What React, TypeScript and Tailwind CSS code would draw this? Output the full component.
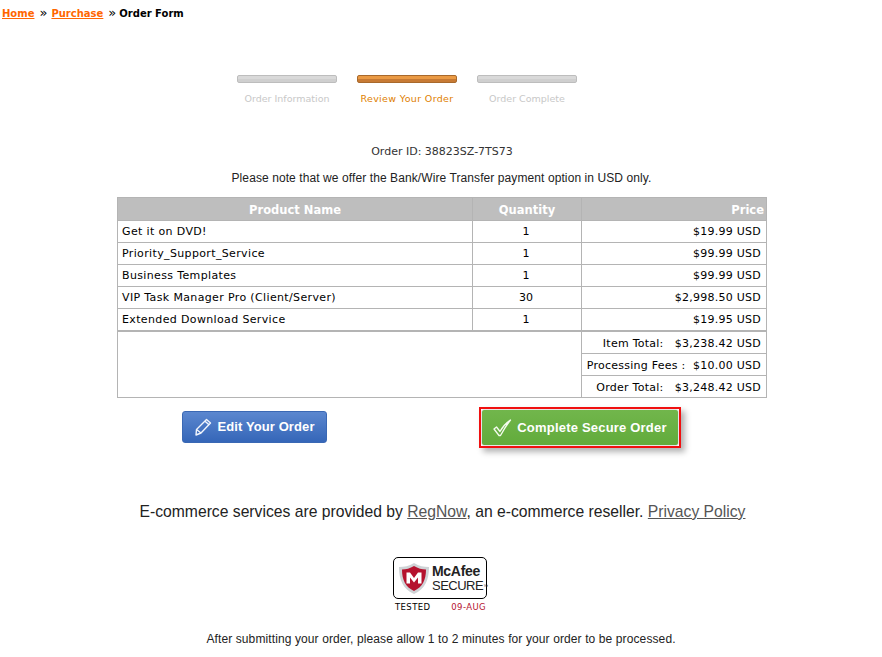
const items = [
  ["Get it on DVD!", "1", "$19.99 USD"],
  ["Priority_Support_Service", "1", "$99.99 USD"],
  ["Business Templates", "1", "$99.99 USD"],
  ["VIP Task Manager Pro (Client/Server)", "30", "$2,998.50 USD"],
  ["Extended Download Service", "1", "$19.95 USD"],
];

const steps = [
  { label: "Order Information", active: false },
  { label: "Review Your Order", active: true },
  { label: "Order Complete", active: false },
];

function Step({ label, active }: { label: string; active: boolean }) {
  return (
    <div className="w-[100px] flex flex-col items-center">
      <div
        className={
          active
            ? "w-full h-[8px] rounded-[2px] border border-[#a8692c] bg-[linear-gradient(#ea9a44_0%,#ea9a44_45%,#c77a34_50%,#c77a34_100%)]"
            : "w-full h-[8px] rounded-[2px] border border-[#bdbdbd] bg-[linear-gradient(#d9d9d9_0%,#d9d9d9_45%,#cfcfcf_50%,#cfcfcf_100%)]"
        }
      />
      <div className={active ? "mt-[10px] whitespace-nowrap text-[9.5px] leading-[12px] tracking-[0.35px] text-[#e08000]" : "mt-[10px] whitespace-nowrap text-[9.5px] leading-[12px] text-[#c8c8c8]"}>
        {label}
      </div>
    </div>
  );
}

function Pencil() {
  return (
    <svg width="18" height="18" viewBox="0 0 18 18" fill="none" stroke="#f1f5fc" strokeWidth="1.4" strokeLinejoin="round" className="shrink-0">
      <path d="M12.5 1.5 16.5 5 7 15 2 17 2.5 11.5Z" />
      <path d="M2.5 11.5 7 15M11 3.2 15 6.8" />
    </svg>
  );
}

function Check() {
  return (
    <svg width="19" height="18" viewBox="0 0 19 18" fill="none" stroke="#f4fbef" strokeWidth="1.3" strokeLinejoin="round" className="shrink-0">
      <path d="M1 10 3.5 8 7 12.5C9.5 8 13 4 17.5 1 14 5.5 10.5 11 7.5 16.5L6 16.5Z" />
    </svg>
  );
}

function Shield() {
  return (
    <svg width="32" height="33" viewBox="0 0 32 33" className="shrink-0">
      <path d="M16 1 C21 4 26 5 31 5 C31 18 27 27 16 32 C5 27 1 18 1 5 C6 5 11 4 16 1Z" fill="#cfd3d6" />
      <path d="M16 4 C20 6.5 24 7.5 28 7.5 C28 18 24.5 25 16 29 C7.5 25 4 18 4 7.5 C8 7.5 12 6.5 16 4Z" fill="#b5122e" />
      <path d="M8.5 10.5H12L16 16 20 10.5H23.5V21.5H20V15.5L16 20.5 12 15.5V21.5H8.5Z" fill="#ffffff" />
    </svg>
  );
}

const border = "border border-[#b4b4b4]";
const numCell = `${border} text-right pt-[2px] pr-[5px] whitespace-pre tracking-[0.25px]`;
const totalCell = `${border} text-right pt-[4px] pr-[5px] whitespace-pre tracking-[0.25px]`;

export default function App() {
  return (
    <div className="w-[882px] h-[657px] overflow-hidden bg-white text-[11px] text-black font-['DejaVu_Sans',Verdana,sans-serif]">
      <div className="pl-[2px] pt-[6px] h-[75px] text-[10px] leading-[14px] font-bold whitespace-pre">
        <a className="text-[#ff6600] underline">Home</a>
        <span className="inline-block ml-[5px] mr-[4px] font-normal text-[13px] leading-[14px]">»</span>
        <a className="text-[#ff6600] underline">Purchase</a>
        <span className="inline-block ml-[5px] mr-[3px] font-normal text-[13px] leading-[14px]">»</span>
        <span>Order Form</span>
      </div>

      <div className="ml-[237px] flex gap-[20px]">
        {steps.map((s) => (
          <Step key={s.label} label={s.label} active={s.active} />
        ))}
      </div>

      <div className="mt-[40px] pl-[2px] w-full text-center text-[11px] leading-[14px] text-[#333]">Order ID: 38823SZ-7TS73</div>
      <div className="mt-[12px] pl-[1px] w-full text-center text-[12px] leading-[14px] tracking-[0.09px] text-[#222] font-['Liberation_Sans',Arial,sans-serif]">
        Please note that we offer the Bank/Wire Transfer payment option in USD only.
      </div>

      <table className="mt-[12px] ml-[117px] w-[649px] table-fixed border-collapse">
        <colgroup>
          <col className="w-[355px]" />
          <col className="w-[109px]" />
          <col className="w-[185px]" />
        </colgroup>
        <thead>
          <tr className="h-[23px] bg-[#bebebe] text-white text-[11.5px] font-bold">
            <th className={`${border} pt-[4px] text-center font-bold`}>Product Name</th>
            <th className={`${border} pt-[4px] text-center font-bold`}>Quantity</th>
            <th className={`${border} pt-[4px] text-right font-bold pr-[2px]`}>Price</th>
          </tr>
        </thead>
        <tbody>
          {items.map((r) => (
            <tr key={r[0]} className="h-[22px]">
              <td className={`${border} pt-[2px] pl-[4px] tracking-[0.36px] whitespace-nowrap`}>{r[0]}</td>
              <td className={`${border} pt-[2px] pr-[2px] text-center`}>{r[1]}</td>
              <td className={numCell}>{r[2]}</td>
            </tr>
          ))}
          <tr className="h-[23px] border-t-2 border-t-[#b4b4b4]">
            <td colSpan={2} rowSpan={3} className={`${border} border-t-2`} />
            <td className={`${totalCell} border-t-2`}>Item Total:   $3,238.42 USD</td>
          </tr>
          <tr className="h-[22px]">
            <td className={totalCell}>Processing Fees :  $10.00 USD</td>
          </tr>
          <tr className="h-[22px]">
            <td className={totalCell}>Order Total:   $3,248.42 USD</td>
          </tr>
        </tbody>
      </table>

      <div className="flex items-start mt-[9px] h-[41px]">
        <button className="mt-[4px] ml-[182px] w-[145px] h-[32px] rounded-[3px] flex items-center justify-center gap-[5px] text-white text-[13px] font-bold tracking-[0.1px] font-['Liberation_Sans',Arial,sans-serif] border border-[#3a68b4] bg-[linear-gradient(#5b87cf,#3566b8)]">
          <Pencil />
          Edit Your Order
        </button>
        <div className="ml-[152px] w-[202px] h-[41px] border-2 border-[#f01010] shadow-[4px_4px_6px_rgba(0,0,0,0.3)] bg-white">
          <button className="w-full h-full flex items-center justify-center gap-[5px] text-white text-[13px] font-bold tracking-[0.2px] font-['Liberation_Sans',Arial,sans-serif] border border-[#e6e6e6] rounded-[3px] bg-[linear-gradient(#71b64c,#62ab3b)]">
            <Check />
            Complete Secure Order
          </button>
        </div>
      </div>

      <div className="mt-[55px] pl-[3px] w-full text-center text-[15.7px] leading-[18px] text-[#222] font-['Liberation_Sans',Arial,sans-serif]">
        E-commerce services are provided by <a className="underline text-[#555]">RegNow</a>, an e-commerce reseller. <a className="underline text-[#555]">Privacy Policy</a>
      </div>

      <div className="mt-[36px] ml-[393px] w-[94px]">
        <div className="h-[42px] rounded-[5px] border border-black flex items-center gap-[2px] pl-[4px]">
          <Shield />
          <div className="flex flex-col font-['Liberation_Sans',Arial,sans-serif] text-[#222] font-bold">
            <span className="text-[14px] leading-[15px] tracking-[-0.3px]">McAfee</span>
            <span className="text-[13px] leading-[14px] font-normal tracking-[-0.5px] whitespace-nowrap">SECURE<span className="text-[5px] align-top">™</span></span>
          </div>
        </div>
        <div className="mt-[2px] flex justify-between pl-[2px] pr-[1px] text-[8.5px] leading-[12px] tracking-[0.4px]">
          <span>TESTED</span>
          <span className="text-[#b5122e]">09-AUG</span>
        </div>
      </div>

      <div className="mt-[19px] w-full text-center text-[12px] leading-[14px] tracking-[0.11px] text-[#222] font-['Liberation_Sans',Arial,sans-serif]">
        After submitting your order, please allow 1 to 2 minutes for your order to be processed.
      </div>
    </div>
  );
}
